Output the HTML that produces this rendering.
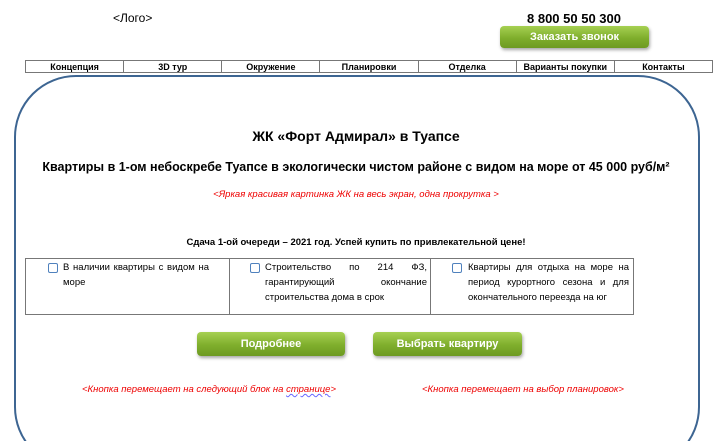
<!DOCTYPE html><html style="height:441px;overflow:hidden"><head><meta charset="utf-8"><style>
body{margin:0;width:720px;height:441px;background:#fff;position:relative;overflow:hidden;font-family:"Liberation Sans","DejaVu Sans",sans-serif;color:#000}
.a{position:absolute;white-space:nowrap}
.btn{position:absolute;background:linear-gradient(#a6d052,#7fae2c 55%,#6d9a22);border-radius:4px;box-shadow:1px 2px 3px rgba(0,0,0,.35);color:#fff;font-weight:bold;text-align:center;font-size:11px}
table.nav{position:absolute;left:25px;top:60px;width:688px;border-collapse:collapse;font-size:9px;font-weight:bold;table-layout:fixed}
table.nav td{border:1px solid #777;text-align:center;height:11px;padding:0}
.clip{position:absolute;left:0;top:0;width:720px;height:441px;overflow:hidden}
.box{position:absolute;left:14px;top:75px;width:682px;height:390px;border:2px solid #3d6592;border-radius:62px}
.feat{position:absolute;left:25px;top:258px;width:607px;height:55px;border:1px solid #777;font-size:9.5px;line-height:15px}
.feat div{position:absolute;top:0;height:55px;box-sizing:border-box;padding-top:1px;text-align:justify}
.cb{position:absolute;width:8px;height:8px;border:1px solid #4f81bd;border-radius:2px;top:4px}
.red{color:#e00;font-style:italic;font-size:9.5px}
</style></head><body>
<div class="a" style="left:113px;top:11px;font-size:12px">&lt;Лого&gt;</div>
<div class="a" style="left:527px;top:11px;font-size:13px;font-weight:bold">8 800 50 50 300</div>
<div class="btn" style="left:500px;top:26px;width:149px;height:22px;line-height:22px">Заказать звонок</div>
<table class="nav"><tr><td>Концепция</td><td>3D тур</td><td>Окружение</td><td>Планировки</td><td>Отделка</td><td>Варианты покупки</td><td>Контакты</td></tr></table>
<div class="clip"><div class="box"></div></div>
<div class="a" style="left:0;width:712px;text-align:center;top:128px;font-size:14px;font-weight:bold">ЖК «Форт Адмирал» в Туапсе</div>
<div class="a" style="left:0;width:712px;text-align:center;top:160px;font-size:12.5px;font-weight:bold">Квартиры в 1-ом небоскребе Туапсе в экологически чистом районе с видом на море от 45 000 руб/м²</div>
<div class="a red" style="left:0;width:712px;text-align:center;top:189px">&lt;Яркая красивая картинка ЖК на весь экран, одна прокрутка &gt;</div>
<div class="a" style="left:0;width:712px;text-align:center;top:237px;font-size:9.5px;font-weight:bold">Сдача 1-ой очереди – 2021 год. Успей купить по привлекательной цене!</div>
<div class="feat">
<span class="cb" style="left:22px"></span><div style="left:37px;width:146px">В наличии квартиры с видом на море</div>
<span style="position:absolute;left:203px;top:0;height:55px;border-left:1px solid #777"></span>
<span class="cb" style="left:224px"></span><div style="left:239px;width:162px">Строительство по 214 ФЗ, гарантирующий окончание строительства дома в срок</div>
<span style="position:absolute;left:404px;top:0;height:55px;border-left:1px solid #777"></span>
<span class="cb" style="left:426px"></span><div style="left:442px;width:161px">Квартиры для отдыха на море на период курортного сезона и для окончательного переезда на юг</div>
</div>
<div class="btn" style="left:197px;top:332px;width:148px;height:24px;line-height:24px">Подробнее</div>
<div class="btn" style="left:373px;top:332px;width:149px;height:24px;line-height:24px">Выбрать квартиру</div>
<div class="a red" style="left:82px;top:384px">&lt;Кнопка перемещает на следующий блок на <span style="text-decoration:underline wavy #66f">странице</span>&gt;</div>
<div class="a red" style="left:422px;top:384px">&lt;Кнопка перемещает на выбор планировок&gt;</div>
</body></html>
